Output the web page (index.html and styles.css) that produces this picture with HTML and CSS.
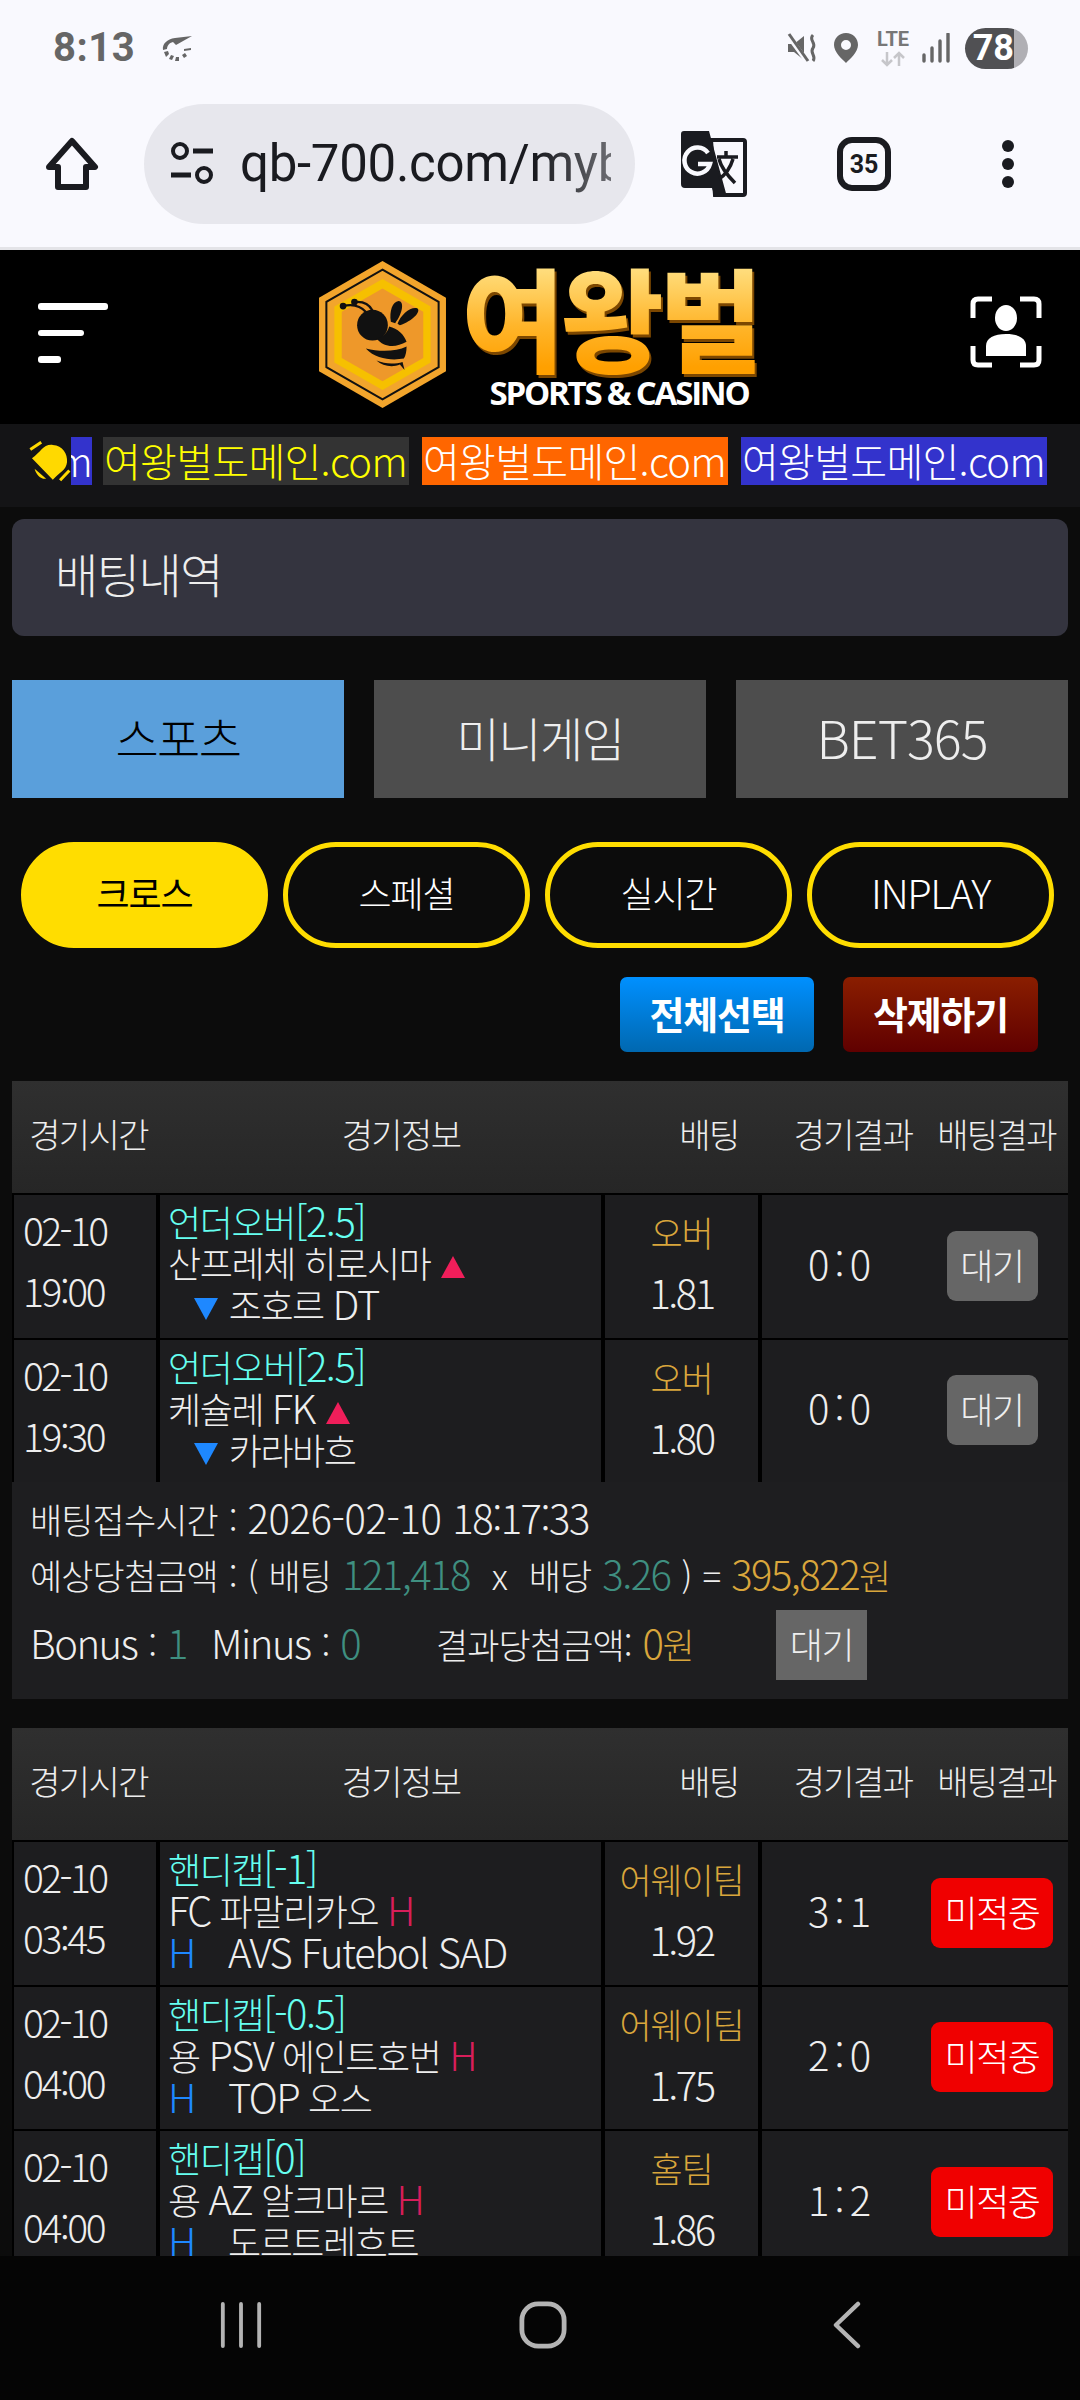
FILE: index.html
```html
<!DOCTYPE html>
<html lang="ko">
<head>
<meta charset="utf-8">
<title>배팅내역</title>
<link rel="stylesheet" href="styles.css">
</head>
<body>
<div class="chrome">
  <div class="statusbar">
    <div class="status-left">
      <span class="clock">8:13</span>
      <svg class="ic-spin" viewBox="0 0 32 26"><path d="M31 1 L14 3 C6 4 1 9 2 15 L6 14 C6 11 8 8 12 7 L15 10 Z" fill="#666"/><path d="M3 17 L7 16 L8 19 L5 22 Z M10 20 L13 21 L11 25 L8 24 Z M15 22 L18 22 L18 26 L14 26 Z M21 20 L24 18 L26 21 L23 23 Z M23 14 L30 13 L30 15 L23 16 Z" fill="#666"/></svg>
    </div>
    <div class="status-right">
      <svg class="ic-mute" viewBox="0 0 30 30"><path d="M1 11 H7 L17 3 V27 L7 19 H1 Z" fill="#666"/><path d="M0 1 L19 27" stroke="#f9f9fe" stroke-width="5"/><path d="M2 1 L21 28" stroke="#666" stroke-width="3"/><path d="M26 2 C21 7 30 10 26 15 C22 20 30 23 26 28" fill="none" stroke="#666" stroke-width="3"/></svg>
      <svg class="ic-pin" viewBox="0 0 24 30"><path fill-rule="evenodd" d="M12 0 C5 0 0 5 0 12 C0 19 8 26 12 30 C16 26 24 19 24 12 C24 5 19 0 12 0 Z M12 7 A5 5 0 1 1 12 17 A5 5 0 1 1 12 7 Z" fill="#666"/></svg>
      <div class="lte"><span class="lte-text">LTE</span><svg class="ic-arrows" viewBox="0 0 26 16"><path d="M7 1 V14 M2 9 L7 14 L12 9" fill="none" stroke="#c6c6ca" stroke-width="2.5"/><path d="M19 15 V2 M14 7 L19 2 L24 7" fill="none" stroke="#c6c6ca" stroke-width="2.5"/></svg></div>
      <svg class="ic-signal" viewBox="0 0 28 30"><path d="M2 22 V28 M10 15 V28 M18 8 V28 M26 1 V28" stroke="#666" stroke-width="3.4" stroke-linecap="round"/></svg>
      <div class="battery"><span class="battery-level">78</span></div>
    </div>
  </div>
  <div class="toolbar">
    <svg class="ic-home" viewBox="0 0 54 54"><path d="M27 4 L50 30 H41 V50 H13 V30 H4 Z" fill="none" stroke="#1a1b20" stroke-width="6" stroke-linejoin="round"/></svg>
    <div class="address">
      <svg class="ic-tune" viewBox="0 0 46 46"><circle cx="11" cy="10" r="7" fill="none" stroke="#1a1b20" stroke-width="4"/><path d="M24 10 H44 M2 34 H22" stroke="#1a1b20" stroke-width="5"/><circle cx="35" cy="34" r="7" fill="none" stroke="#1a1b20" stroke-width="4"/></svg>
      <span class="url">qb-700.com/myb</span>
    </div>
    <svg class="ic-translate" viewBox="0 0 66 66"><path d="M30 9 H62 Q64 9 64 11 V62 Q64 64 62 64 H34 Z" fill="#f9f9fe" stroke="#1a1b20" stroke-width="4"/><path d="M3 0 H28 L46 66 H34 L31 57 H4 Q0 57 0 53 V3 Q0 0 3 0 Z" fill="#1a1b20"/><path d="M27 22 A13 13 0 1 0 29 33 H17" fill="none" stroke="#f9f9fe" stroke-width="4.5"/><path d="M36 26 H57 M45 20 V27 M38 28 C40 36 48 46 54 52 M52 28 C49 38 44 44 38 48" fill="none" stroke="#1a1b20" stroke-width="3.5"/></svg>
    <div class="tab-count">35</div>
    <div class="dots"><i></i><i></i><i></i></div>
  </div>
</div>

<header class="site-head">
  <div class="burger"><i class="b1"></i><i class="b2"></i><i class="b3"></i></div>
  <div class="logo">
    <svg class="hex" viewBox="90 30 380 440">
      <path d="M280 30 L470 140 V360 L280 470 L90 360 V140 Z" fill="#f2a52c"/>
      <path d="M280 56 L448 152 V348 L280 444 L112 348 V152 Z" fill="#f2a52c" stroke="#111" stroke-width="6"/>
      <path d="M280 84 L424 166 V334 L280 416 L136 334 V166 Z" fill="#f6c000"/>
      <path d="M280 112 L402 182 V320 L280 390 L158 320 V182 Z" fill="#ee982a"/>
      <circle cx="250" cy="222" r="46" fill="#111"/>
      <path d="M232 184 C215 165 190 158 162 165 M250 178 C240 160 222 150 196 153" fill="none" stroke="#111" stroke-width="7"/>
      <circle cx="162" cy="165" r="10" fill="#111"/><circle cx="196" cy="153" r="10" fill="#111"/>
      <path d="M305 212 C300 180 310 152 328 150 C345 150 342 185 318 216 Z M325 218 C335 190 365 165 385 172 C395 182 370 210 332 222 Z" fill="#111"/>
      <path d="M300 226 C325 232 345 250 352 272 C320 290 285 290 262 262 C280 258 295 245 300 226 Z M230 292 C270 302 320 302 352 286 C352 300 350 312 344 322 C310 328 260 325 230 292 Z M262 328 C290 340 320 338 340 332 L346 356 L332 340 C310 350 280 345 262 328 Z" fill="#111"/>
    </svg>
    <div class="logo-words">
      <span class="logo-ko">여왕벌</span>
      <span class="logo-en">SPORTS &amp; CASINO</span>
    </div>
  </div>
  <svg class="ic-user" viewBox="0 0 72 72"><path d="M3 22 V8 Q3 3 8 3 H22 M50 3 H64 Q69 3 69 8 V22 M3 50 V64 Q3 69 8 69 H22 M50 69 H64 Q69 69 69 64 V50" fill="none" stroke="#fff" stroke-width="5"/><ellipse cx="36" cy="22" rx="11" ry="13" fill="#fff"/><path d="M16 60 V50 C16 42 24 38 36 38 C48 38 56 42 56 50 V60 Z" fill="#fff"/></svg>
</header>

<div class="notice">
  <svg class="ic-bell" viewBox="85 60 130 130"><path d="M97 118 C125 100 130 75 160 78 C190 80 205 105 203 130 C200 155 180 160 160 183 Z" fill="#ffd900"/><path d="M105 150 C110 170 125 183 140 180 Z" fill="#ffd900"/><path d="M92 92 L125 70 M182 185 L210 155" stroke="#ffd900" stroke-width="9"/></svg>
  <span class="dom dom-blue dom-cut">m</span>
  <span class="dom dom-grey">여왕벌도메인.com</span>
  <span class="dom dom-orange">여왕벌도메인.com</span>
  <span class="dom dom-blue">여왕벌도메인.com</span>
</div>

<main class="content">
  <h1 class="page-title">배팅내역</h1>

  <nav class="tabs">
    <a class="tab tab-on">스포츠</a>
    <a class="tab">미니게임</a>
    <a class="tab tab-lat">BET365</a>
  </nav>

  <nav class="pills">
    <a class="pill pill-on">크로스</a>
    <a class="pill">스페셜</a>
    <a class="pill">실시간</a>
    <a class="pill pill-lat">INPLAY</a>
  </nav>

  <div class="actions">
    <button class="act act-blue">전체선택</button>
    <button class="act act-red">삭제하기</button>
  </div>

  <section class="bet">
    <div class="thead"><span>경기시간</span><span>경기정보</span><span>배팅</span><span>경기결과</span><span>배팅결과</span></div>
    <div class="row">
      <div class="c-time">02-10<br><span class="tm">19:00</span></div>
      <div class="c-info"><div class="market">언더오버<span class="lat">[2.5]</span></div><div>산프레체 히로시마 <i class="tri tri-up"></i></div><div class="away"><i class="tri tri-down"></i> 조호르 <span class="lat">DT</span></div></div>
      <div class="c-pick"><span class="gold">오버</span><br><span class="odd">1.81</span></div>
      <div class="c-result"><span class="score">0 : 0</span><span class="state state-wait">대기</span></div>
    </div>
    <div class="row">
      <div class="c-time">02-10<br><span class="tm">19:30</span></div>
      <div class="c-info"><div class="market">언더오버<span class="lat">[2.5]</span></div><div>케슐레 <span class="lat">FK</span> <i class="tri tri-up"></i></div><div class="away"><i class="tri tri-down"></i> 카라바흐</div></div>
      <div class="c-pick"><span class="gold">오버</span><br><span class="odd">1.80</span></div>
      <div class="c-result"><span class="score">0 : 0</span><span class="state state-wait">대기</span></div>
    </div>
    <div class="summary">
      <p>배팅접수시간 : <span class="lat sum-date">2026-02-10</span> <span class="lat sum-clock">18:17:33</span></p>
      <p>예상당첨금액 : ( 배팅 <span class="teal lat">121,418</span> &nbsp;x&nbsp; 배당 <span class="teal lat">3.26</span> ) = <span class="gold"><span class="lat">395,822</span>원</span></p>
      <div class="sum-last">
        <span class="sum-a"><span class="lat">Bonus</span> : <span class="teal lat">1</span></span>
        <span class="sum-b"><span class="lat">Minus</span> : <span class="teal lat">0</span></span>
        <span class="sum-c">결과당첨금액: <span class="gold"><span class="lat">0</span>원</span></span>
        <span class="sum-state">대기</span>
      </div>
    </div>
  </section>

  <section class="bet">
    <div class="thead"><span>경기시간</span><span>경기정보</span><span>배팅</span><span>경기결과</span><span>배팅결과</span></div>
    <div class="row">
      <div class="c-time">02-10<br><span class="tm">03:45</span></div>
      <div class="c-info"><div class="market">핸디캡<span class="lat">[-1]</span></div><div><span class="lat">FC</span> 파말리카오 <span class="h-home lat">H</span></div><div><span class="h-away lat">H</span><span class="away-name lat">AVS Futebol SAD</span></div></div>
      <div class="c-pick"><span class="gold">어웨이팀</span><br><span class="odd">1.92</span></div>
      <div class="c-result"><span class="score">3 : 1</span><span class="state state-miss">미적중</span></div>
    </div>
    <div class="row">
      <div class="c-time">02-10<br><span class="tm">04:00</span></div>
      <div class="c-info"><div class="market">핸디캡<span class="lat">[-0.5]</span></div><div>용 <span class="lat">PSV</span> 에인트호번 <span class="h-home lat">H</span></div><div><span class="h-away lat">H</span><span class="away-name"><span class="lat">TOP</span> 오스</span></div></div>
      <div class="c-pick"><span class="gold">어웨이팀</span><br><span class="odd">1.75</span></div>
      <div class="c-result"><span class="score">2 : 0</span><span class="state state-miss">미적중</span></div>
    </div>
    <div class="row">
      <div class="c-time">02-10<br><span class="tm">04:00</span></div>
      <div class="c-info"><div class="market">핸디캡<span class="lat">[0]</span></div><div>용 <span class="lat">AZ</span> 알크마르 <span class="h-home lat">H</span></div><div><span class="h-away lat">H</span><span class="away-name">도르트레흐트</span></div></div>
      <div class="c-pick"><span class="gold">홈팀</span><br><span class="odd">1.86</span></div>
      <div class="c-result"><span class="score">1 : 2</span><span class="state state-miss">미적중</span></div>
    </div>
  </section>
</main>

<footer class="navbar">
  <svg class="nav-ic" viewBox="0 0 46 48"><path d="M4 2 V46 M23 2 V46 M42 2 V46" stroke="#b4b4b4" stroke-width="4" stroke-linecap="round"/></svg>
  <svg class="nav-ic" viewBox="0 0 50 50"><rect x="3" y="3" width="44" height="44" rx="17" fill="none" stroke="#b4b4b4" stroke-width="5"/></svg>
  <svg class="nav-ic" viewBox="0 0 32 50"><path d="M28 3 L5 25 L28 47" fill="none" stroke="#b4b4b4" stroke-width="4.5" stroke-linecap="round" stroke-linejoin="round"/></svg>
</footer>
</body>
</html>
```

FILE: styles.css
```css
* { box-sizing: border-box; }
html, body { margin: 0; padding: 0; }
body {
  width: 1080px;
  height: 2400px;
  overflow: hidden;
  display: flex;
  flex-direction: column;
  background: #0c0c0c;
  color: #eee;
  font-family: "Noto Sans CJK KR", "Noto Sans", sans-serif;
  font-weight: 300;
}
svg { display: block; flex: none; }

/* browser chrome */
.chrome { height: 250px; background: #f9f9fe; border-bottom: 3px solid #e4e4e8; flex: none; }
.statusbar { height: 96px; display: flex; justify-content: space-between; align-items: center; padding: 0 52px 0 53px; }
.status-left { display: flex; align-items: center; gap: 26px; }
.clock { font: 700 40px/1 Roboto, sans-serif; color: #666; letter-spacing: 0.5px; }
.ic-spin { width: 32px; height: 26px; }
.status-right { display: flex; align-items: center; }
.ic-mute { width: 30px; height: 30px; margin-right: 17px; }
.ic-pin { width: 24px; height: 30px; margin-right: 19px; }
.lte { width: 32px; display: flex; flex-direction: column; align-items: center; margin-right: 13px; }
.lte-text { font: 700 20px/18px Roboto, sans-serif; color: #777; }
.ic-arrows { width: 26px; height: 16px; margin-top: 3px; }
.ic-signal { width: 28px; height: 30px; margin-right: 15px; }
.battery { width: 63px; height: 41px; border-radius: 21px; background: linear-gradient(90deg, #505053 77%, #b0afb4 77%); overflow: hidden; }
.battery-level { display: block; width: 49px; text-align: right; font: 700 36px/41px Roboto, sans-serif; color: #fff; }
.toolbar { height: 128px; padding-top: 8px; display: flex; align-items: center; position: relative; }
.ic-home { width: 54px; height: 54px; margin-left: 45px; }
.address { width: 491px; height: 120px; margin-left: 45px; border-radius: 60px; background: #e7e7ed; display: flex; align-items: center; padding-left: 25px; }
.ic-tune { width: 46px; height: 46px; }
.url { width: 371px; margin-left: 25px; overflow: hidden; white-space: nowrap; font: 400 51px/64px Roboto, sans-serif; letter-spacing: -0.3px; color: #1a1b20; -webkit-mask-image: linear-gradient(90deg, #000 80%, rgba(0,0,0,.6) 100%); mask-image: linear-gradient(90deg, #000 80%, rgba(0,0,0,.6) 100%); }
.ic-translate { width: 66px; height: 66px; margin-left: 46px; }
.tab-count { width: 54px; height: 54px; margin-left: 90px; border: 6px solid #1a1b20; border-radius: 15px; display: flex; align-items: center; justify-content: center; font: 700 25px/1 Roboto, sans-serif; color: #1a1b20; }
.dots { margin-left: 111px; display: flex; flex-direction: column; gap: 6px; }
.dots i { display: block; width: 12px; height: 12px; border-radius: 50%; background: #1a1b20; }

/* site header */
.site-head { height: 174px; flex: none; background: #000; display: flex; align-items: center; padding: 0 38px; position: relative; }
.burger { width: 71px; display: flex; flex-direction: column; gap: 20px; margin-top: -8px; }
.burger i { display: block; height: 6.5px; border-radius: 3px; background: #fff; }
.b1 { width: 70px; } .b2 { width: 46px; } .b3 { width: 23px; }
.logo { display: flex; width: 441px; height: 147px; margin-left: 210px; margin-top: -6px; }
.hex { width: 127px; height: 147px; flex: none; }
.logo-words { width: 300px; flex: none; display: flex; flex-direction: column; margin-left: 14px; align-items: center; }
.logo-ko { width: 300px; text-align: center; white-space: nowrap; font: 900 112px/108px "Noto Sans CJK KR", sans-serif; letter-spacing: -4px; height: 118px; background: linear-gradient(180deg, #ffdf80 5%, #ffb52a 55%, #ffa000 90%); -webkit-background-clip: text; background-clip: text; color: transparent; filter: drop-shadow(2px 3px 0 #7c4700); }
.logo-en { font: 700 33px/28px "Open Sans", sans-serif; letter-spacing: -2.2px; color: #fff; margin-left: 18px; white-space: nowrap; }
.ic-user { width: 72px; height: 72px; margin-left: auto; margin-top: -10px; margin-right: 0; }

/* notice marquee */
.notice { height: 83px; flex: none; background: #141416; display: flex; align-items: center; padding: 0 0 20px 28px; overflow: hidden; white-space: nowrap; padding-top: 10px; }
.ic-bell { width: 43px; height: 43px; }
.dom { display: block; height: 48px; line-height: 46px; font-size: 40px; letter-spacing: -0.7px; margin-right: 13px; padding: 0 1px; width: 306px; overflow: hidden; flex: none; }
.dom-cut { display: flex; justify-content: flex-end; width: 21px; margin-right: 11px; padding: 0; }
.dom-grey { background: #333; color: #ff0; }
.dom-orange { background: #f60; color: #fff; }
.dom-blue { background: #33c; color: #fff; }

/* page body */
.content { flex: 1; min-height: 0; overflow: hidden; padding: 12px 12px 0; }
.page-title { margin: 0; height: 117px; border-radius: 12px; background: #34343f; padding-left: 43px; font-size: 47px; font-weight: 300; line-height: 108px; letter-spacing: -1.5px; color: #eee; }
.tabs { margin-top: 44px; display: grid; grid-template-columns: repeat(3, 332px); justify-content: space-between; }
.tab { height: 118px; background: #4d4d4d; color: #eee; display: flex; align-items: center; justify-content: center; font-size: 47px; letter-spacing: -1.5px; padding-bottom: 6px; }
.tab-on { background: #5a9fdb; color: #000; }
.tab-lat { font-size: 52px; letter-spacing: -1px; }
.pills { margin-top: 44px; display: grid; grid-template-columns: repeat(4, 247px); gap: 15px; padding-left: 9px; }
.pill { height: 106px; border-radius: 53px; border: 5px solid #ffdd00; color: #fff; display: flex; align-items: center; justify-content: center; font-size: 36px; letter-spacing: -1.2px; padding-bottom: 6px; }
.pill-on { background: #ffdd00; color: #000; font-weight: 400; }
.pill-lat { font-size: 40px; letter-spacing: -1.5px; }
.actions { margin-top: 29px; display: flex; justify-content: flex-end; gap: 29px; padding-right: 30px; }
.act { width: 194px; height: 75px; border: 0; border-radius: 7px; color: #fff; font-family: inherit; font-size: 38px; font-weight: 700; letter-spacing: -1.2px; padding: 0 0 4px; }
.act-blue { background: linear-gradient(180deg, #0090ff, #0068b0); }
.act-red { width: 195px; background: linear-gradient(180deg, #8a1e00, #600000); }

/* bet tables */
.bet { margin-top: 29px; background: #000; }
.thead { height: 112px; background: linear-gradient(180deg, #2f2f2f, #262626); display: grid; grid-template-columns: 153px 472px 144px 144px 143px; align-items: center; justify-items: center; font-size: 34px; letter-spacing: -1.6px; color: #eee; padding-bottom: 8px; }
.row { display: grid; grid-template-columns: 142px 441px 153px 306px; column-gap: 4px; padding-left: 2px; margin-top: 2px; height: 142.5px; overflow: hidden; }
.row > div { background: #1d1d1f; }
.lat { font-size: 40px; letter-spacing: -1.5px; }
.tm { letter-spacing: -2.4px; }
.c-time { padding: 4px 0 0 9px; font-size: 39px; line-height: 61px; letter-spacing: -2.6px; }
.c-info { padding: 5px 0 0 8px; font-size: 36px; line-height: 41px; letter-spacing: -1.4px; white-space: nowrap; overflow: hidden; }
.market { color: #66fff0; }
.away { padding-left: 24px; }
.c-pick { padding-top: 6px; text-align: center; font-size: 35px; line-height: 61px; letter-spacing: -1.2px; }
.odd { font-size: 40px; letter-spacing: -2.5px; }
.gold { color: #d9a63c; }
.teal { color: #3f8f80; }
.c-result { display: grid; grid-template-columns: 154px 152px; align-items: center; justify-items: center; font-size: 36px; padding-bottom: 1px; }
.score { font-size: 40px; letter-spacing: -1px; word-spacing: -4px; padding-bottom: 6px; }
.state { height: 70px; border-radius: 9px; display: flex; align-items: center; justify-content: center; color: #eee; letter-spacing: -1.4px; padding-bottom: 4px; }
.state-wait { width: 91px; background: #666; }
.state-miss { width: 122px; background: #f00000; color: #fff; }
.tri { display: inline-block; width: 0; height: 0; border-left: 12px solid transparent; border-right: 12px solid transparent; margin: 0 2px; }
.tri-up { border-bottom: 22px solid #f01e5a; }
.tri-down { border-top: 22px solid #1e88ff; }
.h-home { color: #d81e5a; }
.h-away { color: #1e88ff; }
.away-name { margin-left: 33px; }
.summary { background: #1e1e20; height: 217px; padding: 7px 18px 0; font-size: 35px; letter-spacing: -0.9px; word-spacing: 2px; color: #eee; }
.summary p { margin: 0; height: 56px; line-height: 56px; white-space: nowrap; }
.sum-date { letter-spacing: -0.4px; }
.sum-clock { letter-spacing: -1.5px; }
.sum-last { display: flex; align-items: center; height: 70px; margin-top: 9px; }
.sum-a { width: 181px; padding-bottom: 6px; }
.sum-b { width: 225px; padding-bottom: 6px; }
.sum-c { width: 340px; padding-bottom: 6px; }
.sum-state { width: 91px; height: 70px; background: #666; display: flex; align-items: center; justify-content: center; padding-bottom: 4px; font-size: 36px; letter-spacing: -1.4px; }

/* android nav */
.navbar { height: 144px; flex: none; background: #050505; display: flex; align-items: center; position: relative; padding: 0 0 6px 219px; }
.nav-ic { height: 48px; }
.nav-ic:nth-child(1) { width: 44px; }
.nav-ic:nth-child(2) { width: 48px; margin-left: 256px; }
.nav-ic:nth-child(3) { width: 31px; margin-left: 264px; }
```
